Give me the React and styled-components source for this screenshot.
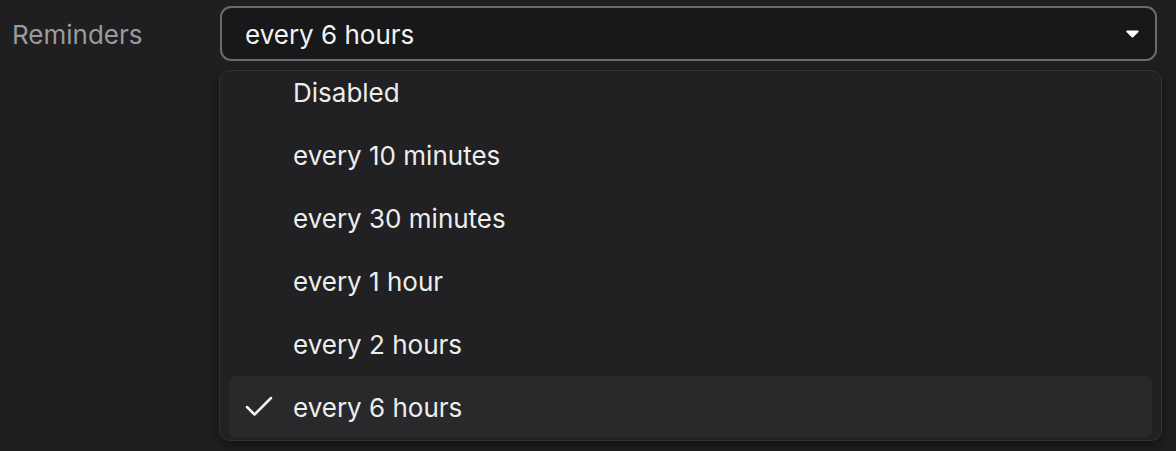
import React from 'react';
import styled, { createGlobalStyle } from 'styled-components';
import { Check } from 'lucide-react';

const options = [
  'Disabled',
  'every 10 minutes',
  'every 30 minutes',
  'every 1 hour',
  'every 2 hours',
  'every 6 hours',
];

const GlobalStyle = createGlobalStyle`
  html, body {
    margin: 0;
    background: #1f1f21;
    font-family: Inter, "Noto Sans", sans-serif;
    -webkit-font-smoothing: antialiased;
  }
`;

const Page = styled.div`
  width: 1176px;
  height: 451px;
  overflow: hidden;
  background: #1f1f21;
`;

const Row = styled.div`
  display: flex;
  align-items: center;
  padding: 6px 19px 0 12px;
`;

const Label = styled.div`
  width: 208px;
  flex: none;
  color: #9b9b9d;
  font-size: 26px;
  padding-top: 2px;
`;

const SelectWrap = styled.div`
  position: relative;
  flex: 1;
`;

const Trigger = styled.button`
  box-sizing: border-box;
  width: 100%;
  height: 55px;
  display: flex;
  align-items: center;
  justify-content: space-between;
  padding: 2px 16px 0 23px;
  background: #18181a;
  border: 2px solid #6b6b6d;
  border-radius: 11px;
  color: #f2f2f2;
  font-family: inherit;
  font-size: 26px;
  text-align: left;
`;

const Caret = styled.svg`
  width: 13px;
  height: 8px;
  margin-bottom: 2px;
`;

const Popup = styled.div`
  position: absolute;
  top: 64px;
  left: -1px;
  right: -5px;
  height: 371px;
  box-sizing: border-box;
  display: flex;
  flex-direction: column;
  justify-content: flex-end;
  overflow: hidden;
  padding: 0 9px 2px 9px;
  background: #212123;
  border: 1px solid #323234;
  border-radius: 11px;
  box-shadow: 0 4px 14px rgba(0, 0, 0, 0.45);
`;

const Item = styled.div`
  flex: none;
  height: 62px;
  margin-top: 1px;
  display: flex;
  align-items: center;
  padding-left: 64px;
  position: relative;
  border-radius: 7px;
  background: ${(p) => (p.$selected ? '#29292b' : 'transparent')};
  color: #ededed;
  font-size: 26px;
`;

const Tick = styled.span`
  position: absolute;
  left: 12px;
  top: 50%;
  transform: translateY(-50%);
  display: flex;
  color: #f4f4f4;
`;

export default function App() {
  const value = 'every 6 hours';
  return (
    <Page>
      <GlobalStyle />
      <Row>
        <Label>Reminders</Label>
        <SelectWrap>
          <Trigger>
            <span>{value}</span>
            <Caret viewBox="0 0 13 8">
              <path d="M1.2 0.6h10.6c0.8 0 1.2 0.9 0.7 1.5L7.2 7.2c-0.4 0.4-1 0.4-1.4 0L0.5 2.1C0 1.5 0.4 0.6 1.2 0.6z" fill="#ffffff" />
            </Caret>
          </Trigger>
          <Popup>
            {options.map((o) => (
              <Item key={o} $selected={o === value}>
                {o === value && (
                  <Tick>
                    <Check size={36} strokeWidth={1.65} />
                  </Tick>
                )}
                {o}
              </Item>
            ))}
          </Popup>
        </SelectWrap>
      </Row>
    </Page>
  );
}
